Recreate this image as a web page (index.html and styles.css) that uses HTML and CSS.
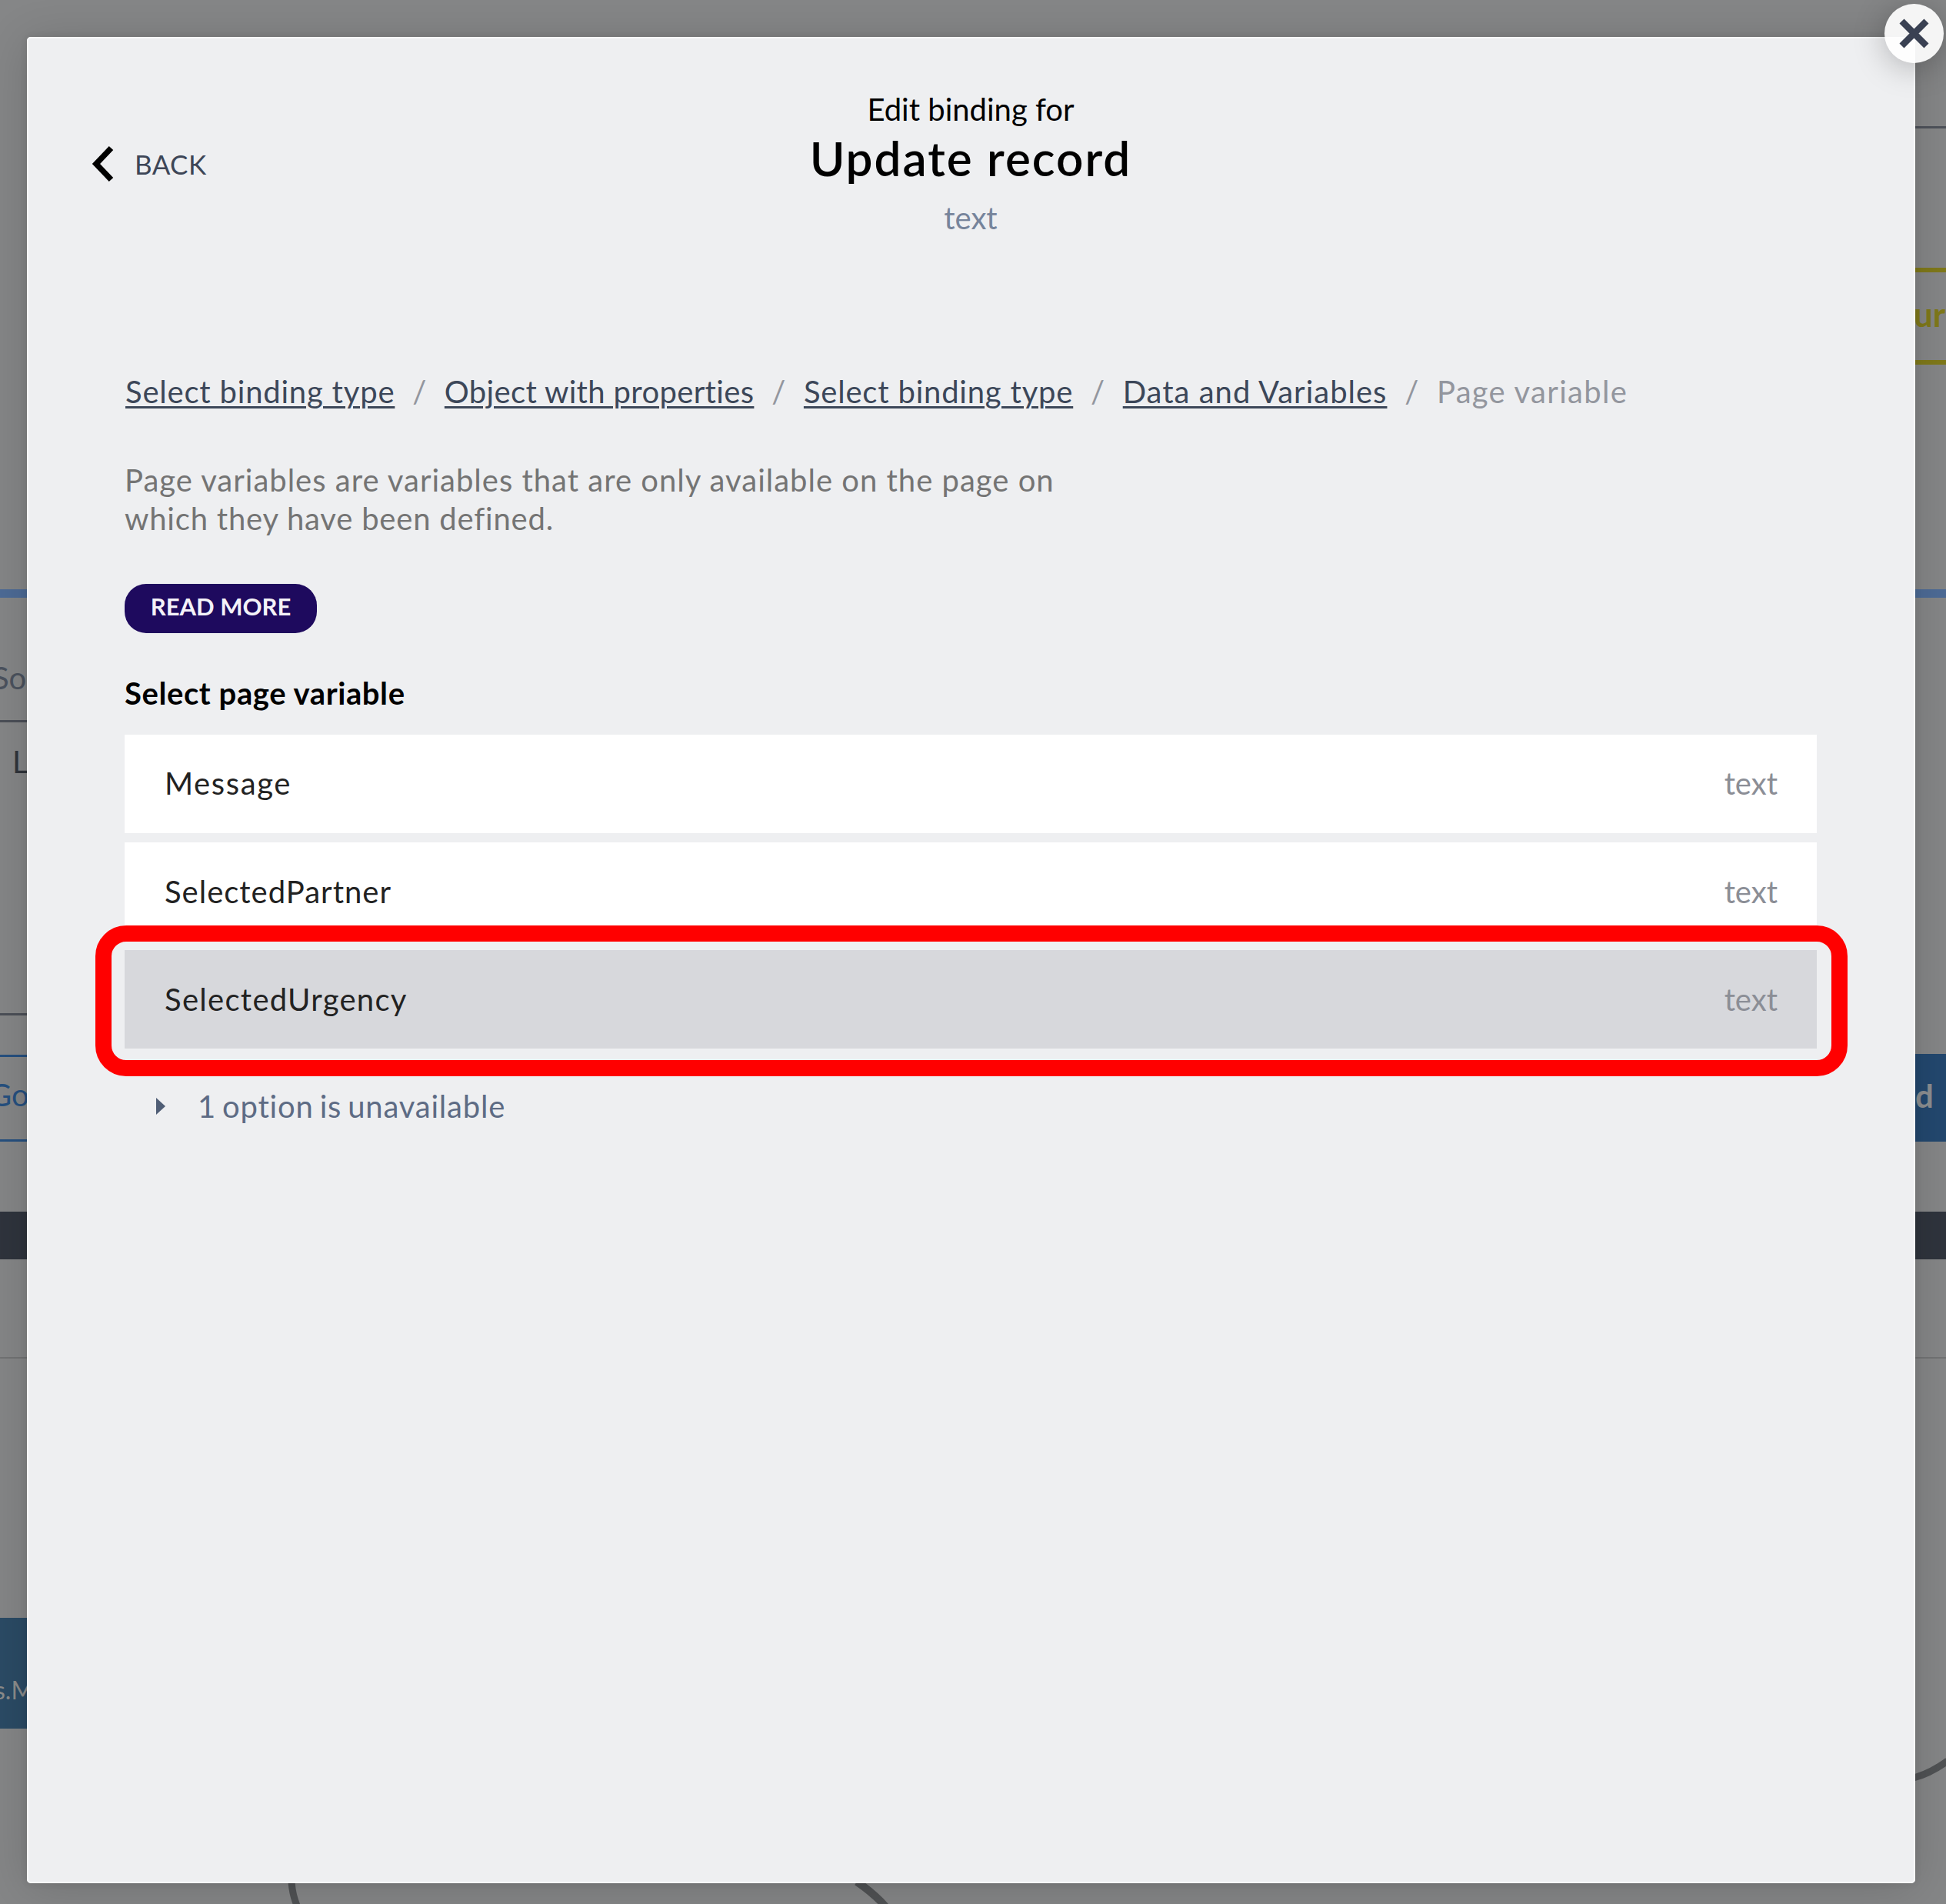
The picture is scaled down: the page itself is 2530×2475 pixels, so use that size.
FILE: index.html
```html
<!DOCTYPE html>
<html lang="en">
<head>
<meta charset="utf-8">
<title>Edit binding</title>
<link rel="stylesheet" href="styles.css">
</head>
<body>
<div class="page">
  <aside class="canvas canvas-left">
    <div class="accent-line"></div>
    <div class="field-label"><span>So</span></div>
    <div class="field-box"><span>L</span></div>
    <div class="outline-button"><span>Go</span></div>
    <div class="dark-bar"></div>
    <div class="panel"></div>
    <div class="node"><span>s.M</span></div>
  </aside>
  <main class="modal">
    <button class="close" aria-label="Close">
      <svg viewBox="0 0 77 77" width="77" height="77"><path d="M22.500 22.500 54.500 54.500M54.500 22.500 22.500 54.500" stroke="#3a4153" stroke-width="8.500" fill="none"/></svg>
    </button>
    <header class="header">
      <a class="back">
        <svg viewBox="0 0 30 48" width="30" height="48"><path d="M25.500 3.500 6 24l19.500 20.500" stroke="#000" stroke-width="7.500" fill="none"/></svg>
        <span>BACK</span>
      </a>
      <div class="heading">
        <div class="eyebrow">Edit binding for</div>
        <h1 class="title">Update record</h1>
        <div class="kind">text</div>
      </div>
    </header>
    <nav class="crumbs">
      <a>Select binding type</a><i>/</i><a class="crumb-object">Object with properties</a><i>/</i><a>Select binding type</a><i>/</i><a class="crumb-data">Data and Variables</a><i>/</i><span>Page variable</span>
    </nav>
    <p class="description">Page variables are variables that are only available on the page on<br><span>which they have been defined.</span></p>
    <button class="read-more">READ MORE</button>
    <h2 class="section">Select page variable</h2>
    <ul class="options">
      <li class="option"><span class="name-short">Message</span><em>text</em></li>
      <li class="option"><span>SelectedPartner</span><em>text</em></li>
      <li class="option selected"><span>SelectedUrgency</span><em>text</em></li>
    </ul>
    <div class="unavailable">
      <svg viewBox="0 0 12 22" width="12" height="22"><path d="M0 0 12 11 0 22z" fill="#4f5d75"/></svg>
      <span>1 option is unavailable</span>
    </div>
  </main>
  <aside class="canvas canvas-right">
    <div class="toolbar"></div>
    <div class="warning"><span>ur</span></div>
    <div class="accent-line"></div>
    <div class="solid-button"><span>d</span></div>
    <div class="dark-bar"></div>
    <div class="panel"></div>
    <svg class="wire" viewBox="0 0 40 40" width="40" height="40"><path d="M-2 31Q20 25 42 9" stroke="#505254" stroke-width="9" fill="none"/></svg>
  </aside>
  <svg class="wires" viewBox="0 0 2530 27" width="2530" height="27"><path d="M379-2Q380 14 386 29" stroke="#505254" stroke-width="9" fill="none"/><path d="M1114-2Q1136 13 1151 30" stroke="#505254" stroke-width="10" fill="none"/></svg>
</div>
</body>
</html>
```
FILE: styles.css
```css
* { box-sizing: border-box; }
body {
  margin: 0;
  font-family: Lato, "Open Sans", sans-serif;
  font-size: 40px;
  background: #858687;
}
.page {
  width: 2530px;
  height: 2475px;
  overflow: hidden;
  display: grid;
  grid-template-columns: 35px 2455px 40px;
  grid-template-rows: 48px 2400px 27px;
}
.canvas { grid-row: 2; overflow: hidden; white-space: nowrap; color: #4b525e; }
.canvas-left { grid-column: 1; }
.canvas-right { grid-column: 3; }
.accent-line { height: 11px; margin-top: 718px; background: #4d6b96; }
.field-label { height: 162px; padding-top: 80px; border-bottom: 3px solid #4b4f57; }
.field-label span { margin-left: -10px; }
.field-box { height: 381px; padding: 27px 0 0 16px; border-bottom: 3px solid #4b4f57; color: #30343b; }
.outline-button { height: 113px; margin-top: 51px; padding-top: 25px; border: solid #26507f; border-width: 3px 0; color: #26507f; }
.outline-button span { margin-left: -14px; }
.dark-bar { height: 62px; margin-top: 91px; background: #2f343d; }
.panel { height: 129px; border-bottom: 2px solid #727374; }
.node { height: 144px; margin-top: 337px; padding-top: 74px; background: #2b4b65; color: #8c8c8b; font-size: 32px; }
.node span { margin-left: -7px; }
.toolbar { height: 119px; border-bottom: 3px solid #4e525a; }
.warning { height: 126px; margin-top: 181px; padding-top: 28px; border: solid #7f791a; border-width: 6px 0; color: #7f791a; font-weight: 700; font-size: 44px; }
.warning span { margin-left: -2px; }
.canvas-right .accent-line { margin-top: 292px; }
.solid-button { height: 114px; margin-top: 593px; padding-top: 29px; background: #23486f; color: #8d8f91; font-weight: 700; font-size: 42px; }
.wire { display: block; margin-top: 514px; }
.wires { grid-row: 3; grid-column: 1 / 4; }
.modal {
  grid-row: 2;
  grid-column: 2;
  position: relative;
  z-index: 1;
  padding: 0 128px 0 127px;
  border-radius: 5px;
  background: #eeeff1;
  box-shadow: 0 6px 60px rgba(0, 0, 0, .16), 0 0 10px rgba(0, 0, 0, .1), inset 0 0 0 2px #f7f8f9;
}
.close {
  position: absolute;
  top: -43px;
  right: -37px;
  width: 77px;
  height: 77px;
  padding: 0;
  border: 0;
  border-radius: 50%;
  background: rgba(255, 255, 255, .92);
  box-shadow: 0 6px 40px rgba(0, 0, 0, .25);
}
.close svg { display: block; }
.header { display: flex; height: 436px; margin: 0 -127px; padding-left: 84px; }
.back { display: flex; align-items: center; gap: 26px; height: 48px; width: 300px; margin-top: 141px; color: #3d4657; font-size: 35px; letter-spacing: .4px; }
.heading { flex: 1; padding-right: 384px; text-align: center; }
.eyebrow { margin-top: 69px; line-height: 50px; }
.title { margin: 0; font-size: 62px; line-height: 76px; font-weight: 600; letter-spacing: 2px; }
.kind { margin-top: 15px; line-height: 50px; color: #76849b; }
.crumbs { display: flex; padding-left: 1px; line-height: 50px; white-space: nowrap; color: #93969e; letter-spacing: .8px; }
.crumbs a { color: #3c4759; text-decoration: underline; text-decoration-thickness: 3px; text-underline-offset: 4px; }
.crumbs .crumb-object { letter-spacing: .35px; }
.crumbs .crumb-data { letter-spacing: 1px; }
.crumbs i { width: 64.5px; font-style: normal; text-align: center; }
.crumbs span { letter-spacing: 1.3px; }
.description { margin: 65px 0 0; line-height: 50px; letter-spacing: 1px; color: #747474; }
.description span { letter-spacing: .8px; }
.read-more { display: block; width: 250px; height: 64px; margin-top: 60px; padding: 0 0 7px; border: 0; border-radius: 28px; background: #1e0a5e; color: #f4f2f8; font: 700 31px Lato, sans-serif; }
.section { margin: 53px 0 0; font-size: 40px; line-height: 50px; font-weight: 700; letter-spacing: .6px; color: #000; }
.options { list-style: none; margin: 29px 0 0; padding: 0; }
.option { display: flex; justify-content: space-between; height: 128px; margin-bottom: 12px; padding: 38px 51px 0 52px; line-height: 50px; background: #fff; color: #222; }
.option + .option { padding-top: 39px; }
.option span { letter-spacing: 1px; }
.option .name-short { letter-spacing: 1.6px; }
.option em { font-style: normal; color: #8b8e96; }
.selected { position: relative; background: #d7d8dc; }
.selected span { letter-spacing: 1.3px; }
.selected::after { content: ""; position: absolute; inset: -32px -40px -36px -38px; border: 21px solid #f00; border-radius: 40px; }
.unavailable { display: flex; align-items: center; gap: 42px; margin: 50px 0 0 41px; line-height: 50px; letter-spacing: .8px; word-spacing: -3px; color: #5d6b84; }
```
